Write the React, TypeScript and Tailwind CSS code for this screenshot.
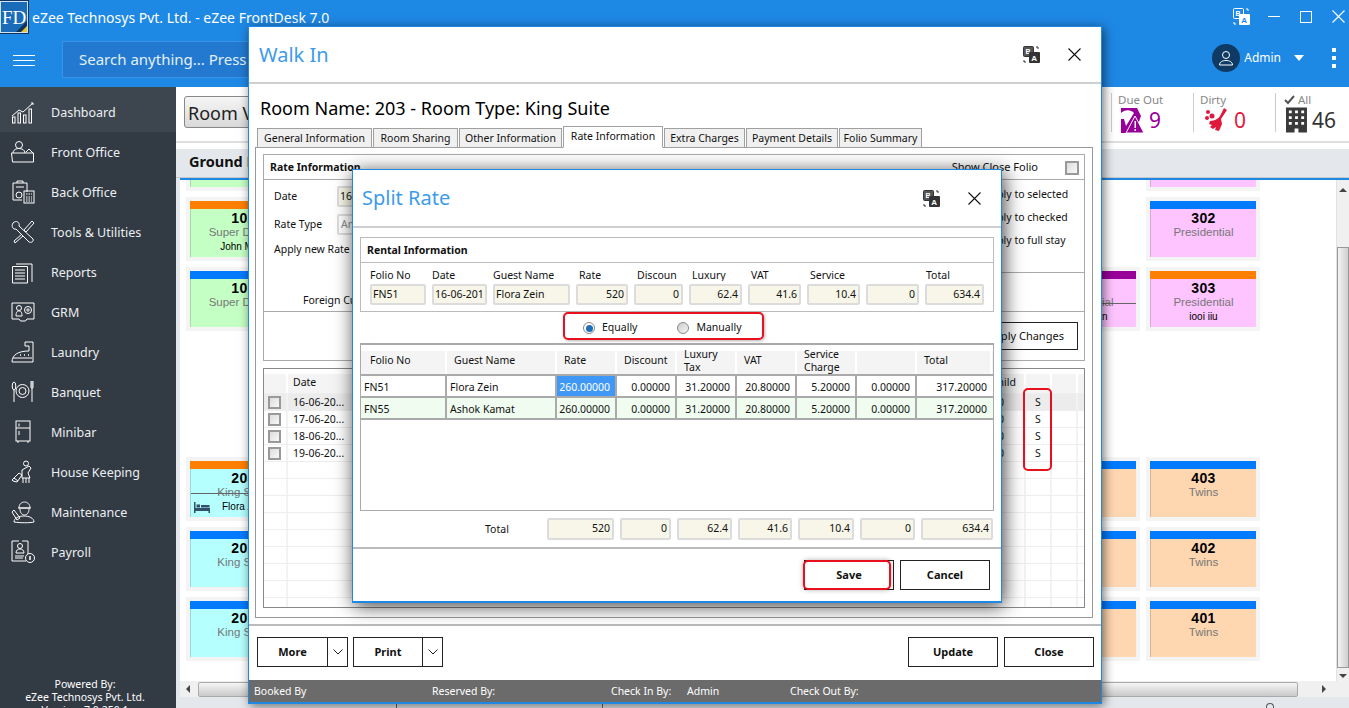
import React from "react";

const W = "fill-none stroke-white";
const navIcons: React.ReactNode[] = [
  <svg key="a" width="24" height="24" viewBox="0 0 24 24" className={W} strokeWidth="1"><path d="M1 16l7-6 4 2 10-9-2 0M22 3v2" /><rect x="1.5" y="17" width="2.5" height="6" /><rect x="7" y="13" width="2.5" height="10" /><rect x="12.5" y="15" width="2.5" height="8" /><rect x="18" y="9" width="2.5" height="14" /></svg>,
  <svg key="b" width="24" height="24" viewBox="0 0 24 24" className={W} strokeWidth="1"><circle cx="8" cy="5" r="3.5" /><path d="M2 13c0-3 3-4.500 6-4.500s6 1.500 6 4.500M0.500 13h22v9H1.500zM15 12l3-3 2 2 2 2" /></svg>,
  <svg key="c" width="24" height="24" viewBox="0 0 24 24" className={W} strokeWidth="1"><path d="M2 3h14v9M2 3v17h9M6 3V1h6v2M5 7h8" /><circle cx="8" cy="15" r="3" /><rect x="13" y="11" width="10" height="12" /><path d="M15 14h6M15 17h6M15 19h6M15 21h6" strokeDasharray="1.500 1" /></svg>,
  <svg key="d" width="24" height="24" viewBox="0 0 24 24" className={W} strokeWidth="1"><path d="M2 3c3-3 7-1 6 3l14 13c1 3-2 4-4 3L5 9C2 10 0 6 2 3zM21 1l2 2-8 9-2-2zM11 14l-8 7 1 2 8-7" /></svg>,
  <svg key="e" width="24" height="24" viewBox="0 0 24 24" className={W} strokeWidth="1"><path d="M5 4h16v18M1.500 6.500h15V23h-15zM4 10h10M4 13h10M4 16h10M4 19h10" /></svg>,
  <svg key="f" width="24" height="20" viewBox="0 0 24 20" className={W} strokeWidth="1"><path d="M1 1h22v16h-7l-1.500 2h-5L8 17H1z" /><circle cx="8" cy="6" r="2.500" /><path d="M5 14c0-4 1-5 3-5s3 1 3 5z" /><circle cx="17" cy="8" r="3.500" /><circle cx="17" cy="8" r="1.200" /></svg>,
  <svg key="g" width="24" height="22" viewBox="0 0 24 22" className={W} strokeWidth="1"><path d="M14 1h8v20H1c0-7 6-11 17-11V5h-4zM2 17h19" /><path d="M9 14h1M13 14h1M17 14h1" strokeWidth="1.500" /></svg>,
  <svg key="h" width="24" height="24" viewBox="0 0 24 24" className={W} strokeWidth="1"><ellipse cx="3" cy="6" rx="1.800" ry="4" /><path d="M3 10v12M20 1v6c0 2 2 2 2 0V1M21 1v21" /><circle cx="11.500" cy="11" r="6.500" /><circle cx="11.500" cy="11" r="3.500" /></svg>,
  <svg key="i" width="24" height="24" viewBox="0 0 24 24" className={W} strokeWidth="1"><rect x="5" y="1" width="14" height="20" /><path d="M5 8h14M8 3.500v3M8 11v4M7 21v2M17 21v2" /></svg>,
  <svg key="j" width="24" height="24" viewBox="0 0 24 24" className={W} strokeWidth="1"><circle cx="15" cy="3.500" r="2.500" /><path d="M11 10l7-4 2 2-3 5 2 5h-8zM1 20l7-7 3 2-5 7-4-1zM3 18l4 3M12 18v5M15 18v5M18 18v5" /></svg>,
  <svg key="k" width="24" height="24" viewBox="0 0 24 24" className={W} strokeWidth="1"><path d="M8 8c0-8 11-8 11 0zM7 8h13M9 9c0 8 9 8 9 0M3 22c0-4 5-6 10-6s10 2 10 6c-4 1-14 1-20 0zM3 10l6 8-3 2-5-8z" /></svg>,
  <svg key="l" width="24" height="24" viewBox="0 0 24 24" className={W} strokeWidth="1"><path d="M8 1H1v20h14M11 1h6v13" /><circle cx="9" cy="6" r="2.500" /><path d="M5 13c0-3 2-4 4-4s4 1 4 4zM4 16h9M4 18h8" /><circle cx="19" cy="18" r="4.500" /><path d="M19 16v4" strokeWidth="1.500" /></svg>,
];
const navLabels = ["Dashboard", "Front Office", "Back Office", "Tools & Utilities", "Reports", "GRM", "Laundry", "Banquet", "Minibar", "House Keeping", "Maintenance", "Payroll"];

function Translate({ dark }: { dark?: boolean }) {
  const c = dark ? "#333" : "#fff";
  const t = dark ? "#fff" : "#1e88e5";
  return (
    <svg width="17" height="17" viewBox="0 0 17 17">
      <rect x="0.500" y="0.500" width="10" height="10" rx="1" fill={dark ? "#555" : "none"} stroke={c} />
      <text x="2.500" y="8" fontSize="7" fontWeight="700" fill="#fff" fontFamily="Liberation Sans">B</text>
      <rect x="6" y="6" width="11" height="11" rx="1" fill={c} />
      <text x="8.200" y="15" fontSize="8" fontWeight="700" fill={t} fontFamily="Liberation Sans">A</text>
      <path d="M13 1h2v2M1 14v2h2" stroke={c} fill="none" />
    </svg>
  );
}

function CloseX({ size = 13, color = "#111" }: { size?: number; color?: string }) {
  return (
    <svg width={size} height={size} viewBox="0 0 13 13" stroke={color} strokeWidth="1.100"><path d="M0.500 0.500l12 12M12.500 0.500l-12 12" /></svg>
  );
}

function Chevron() {
  return (
    <svg width="10" height="6" viewBox="0 0 10 6" fill="none" stroke="#222"><path d="M0.500 0.500L5 5l4.500-4.500" /></svg>
  );
}

function Card({ bar, bg, num, name, guest, strike, bed }: { bar: string; bg: string; num: string; name: string; guest?: string; strike?: boolean; bed?: boolean }) {
  return (
    <div className={`relative w-[106px] h-[56px] flex flex-col shrink-0 shadow-[0_0_0_4px_#f4f4f4] border-l border-black/15 ${bg} font-['Liberation_Sans',sans-serif]`}>
      <div className={`h-2 -ml-px ${bar}`} />
      <div className="text-center text-[14px] tracking-[0.3px] font-bold leading-[16px] mt-[1px] text-black">{num}</div>
      <div className="text-center text-[11.500px] leading-[13px] text-[#777]">{name}</div>
      {guest && (
        <div className={`flex items-center gap-[12px] text-[10px] leading-[12px] text-black mt-[2px] whitespace-nowrap ${bed ? "pl-[3px]" : "justify-center"}`}>
          {bed && (
            <svg width="16" height="11" viewBox="0 0 16 11" fill="#35506b"><path d="M0 0h1.500v6H16v5h-1.500V9h-13v2H0zM2.500 2.500h3.500v3H2.500zM7 3h8.500v2.500H7z" /></svg>
          )}
          <span>{guest}</span>
        </div>
      )}
      {strike && <div className="absolute left-0 right-0 top-[32px] h-px bg-[#666]" />}
    </div>
  );
}

const green = "bg-[#c4ffc4]";
const cyan = "bg-[#b5ffff]";
const pink = "bg-[#fec4ff]";
const peach = "bg-[#fed6b0]";
const blueBar = "bg-[#007bff]";
const orangeBar = "bg-[#ff7f00]";

const gridHeaderBg = "bg-gradient-to-b from-white from-20% to-[#f4f4f4] to-20%";

function Field({ w, label, value, right, pad }: { w: string; label: string; value: string; right?: boolean; pad?: string }) {
  return (
    <div className={`${w} shrink-0 flex flex-col`}>
      <div className={`h-[12px] leading-[12px] mt-[6px] mb-[3px] whitespace-nowrap overflow-hidden ${pad ?? ""}`}>{label}</div>
      <Box value={value} right={right} className="h-[21px] w-full" />
    </div>
  );
}

function Box({ value, right, className }: { value: string; right?: boolean; className?: string }) {
  return (
    <div className={`bg-[#f7f6e8] border-2 border-[#dcdcdc] rounded-[2px] flex items-center pl-[1px] pr-[2px] overflow-hidden whitespace-nowrap ${right ? "justify-end" : ""} ${className ?? ""}`}>
      {value}
    </div>
  );
}

const splitCols = ["w-[86px]", "w-[110px]", "w-[60px]", "w-[60px]", "w-[60px]", "w-[60px]", "w-[60px]", "w-[60px]", "w-[75px]"];
const splitHead: React.ReactNode[] = ["Folio No", "Guest Name", "Rate", "Discount", <>Luxury<br />Tax</>, "VAT", <>Service<br />Charge</>, "", "Total"];
const splitPad = ["pl-[9px]", "pl-[7px]", "pl-[7px]", "pl-[7px]", "pl-[7px]", "pl-[7px]", "pl-[7px]", "pl-[7px]", "pl-[7px]"];

function SplitRow({ values, bg }: { values: string[]; bg: string }) {
  return (
    <div className={`flex h-[22px] border-b-2 border-[#aaa] ${bg}`}>
      {values.map((v, i) => (
        <div
          key={i}
          className={`${splitCols[i]} shrink-0 flex items-center border-r-2 border-[#aaa] last:border-r-0 ${i < 2 ? "pl-[3px]" : "justify-end pr-[5px]"} ${v === "260.00000" && bg === "bg-white" ? "bg-[#3f98f5] text-white" : ""}`}
        >
          <span className="pt-[3px]">{v}</span>
        </div>
      ))}
    </div>
  );
}

function WBtn({ w, children, className }: { w: string; children: React.ReactNode; className?: string }) {
  return (
    <div className={`${w} h-[30px] border border-[#222] flex items-center justify-center font-bold text-[11px] bg-white ${className ?? ""}`}>{children}</div>
  );
}

export default function App() {
  return (
    <div className="relative w-[1349px] h-[708px] overflow-hidden flex flex-col bg-white text-[10.500px] text-[#111] font-['Noto_Sans',sans-serif]">
      {/* App header */}
      <header className="h-[87px] shrink-0 bg-[#1e88e5] text-white flex flex-col">
        <div className="h-[33px] flex items-start">
          <div className="relative w-[28px] h-[32px] mt-[1px] bg-[#1a6cb8] border border-[#cfe3f5] outline outline-1 outline-[#12325a] flex items-center overflow-hidden pl-[1px]">
            <span className="font-['Liberation_Serif',serif] text-[19px] leading-none text-white">FD</span>
            <svg className="absolute right-0 bottom-0" width="11" height="11" viewBox="0 0 11 11"><path d="M11 0v11H0z" fill="#12325a" /><path d="M11 5v6H5z" fill="#e5c52e" /></svg>
          </div>
          <div className="ml-[4px] mt-[8px] text-[14px] leading-[20px] whitespace-nowrap">eZee Technosys Pvt. Ltd. - eZee FrontDesk 7.0</div>
          <div className="ml-auto flex items-center h-[33px] pr-[4px]">
            <Translate />
            <div className="w-[12px] h-px bg-white ml-[18px]" />
            <div className="w-[12px] h-[12px] border border-white ml-[20px]" />
            <div className="ml-[20px]"><CloseX size={13} color="#fff" /></div>
          </div>
        </div>
        <div className="flex-1 flex items-start">
          <div className="w-[22px] ml-[13px] mt-[22px] flex flex-col gap-[4px]">
            <div className="h-px bg-white" />
            <div className="h-px bg-white" />
            <div className="h-px bg-white" />
          </div>
          <div className="ml-[27px] mt-[8px] w-[400px] h-[37px] bg-[#2279cf] border border-[#3a93e6] flex items-center pl-[16px] text-[15px] text-[#e3f0fb] whitespace-nowrap">Search anything... Press Ctrl+F</div>
          <div className="ml-auto flex items-center mt-[11px] pr-[13px]">
            <div className="w-[28px] h-[28px] rounded-full bg-[#0f3a63] flex items-center justify-center">
              <svg width="16" height="16" viewBox="0 0 16 16" fill="none" stroke="#fff"><circle cx="8" cy="5" r="3.500" /><path d="M1.500 15c0-3 3-4.500 6.500-4.500s6.500 1.500 6.500 4.500z" /></svg>
            </div>
            <span className="ml-[4px] text-[12px] leading-[16px]">Admin</span>
            <svg className="ml-[13px]" width="10" height="6" viewBox="0 0 10 6" fill="#fff"><path d="M0 0h10L5 6z" /></svg>
            <div className="ml-[28px] flex flex-col gap-[4px]">
              <div className="w-1 h-1 bg-white" />
              <div className="w-1 h-1 bg-white" />
              <div className="w-1 h-1 bg-white" />
            </div>
          </div>
        </div>
      </header>

      <div className="flex-1 flex min-h-0">
        {/* Sidebar */}
        <aside className="w-[176px] shrink-0 bg-[#323a44] text-[#eceff1] flex flex-col text-[12.500px]">
          {navLabels.map((l, i) => (
            <div key={l} className={`flex items-center shrink-0 ${i === 0 ? "h-[45px] pt-[5px] bg-[#3d454f]" : "h-[40px]"}`}>
              <div className="w-[24px] ml-[11px] flex justify-center">{navIcons[i]}</div>
              <span className="ml-[16px] pt-[2px] leading-[16px]">{l}</span>
            </div>
          ))}
          <div className="mt-auto h-[30px] w-[170px] overflow-hidden text-center text-[10.500px] leading-[13px] text-white">
            <div>Powered By:</div>
            <div>eZee Technosys Pvt. Ltd.</div>
            <div>Version: 7.0.250.1</div>
          </div>
        </aside>

        {/* Main */}
        <main className="flex-1 min-w-0 flex flex-col bg-[#e4e8ec]">
          <div className="h-[54px] shrink-0 bg-white flex items-start">
            <div className="ml-[8px] mt-[9px] w-[160px] h-[32px] border border-[#888] rounded-[3px] bg-gradient-to-b from-[#f6f6f6] to-[#d9d9d9] text-[18px] leading-[32px] pl-[3px] text-[#222] whitespace-nowrap">Room View</div>
            <div className="ml-auto flex h-[39px] mt-[6px] mr-[13px]">
              <div className="w-[82px] border-l border-[#ccc] pl-[6px] flex flex-col">
                <span className="text-[11.500px] leading-[14px] text-[#888]">Due Out</span>
                <div className="flex items-center ml-[2px]">
                  <svg width="25" height="26" viewBox="0 0 25 26"><path d="M1 1h16l4 8-6 17H1z" fill="#990099" /><path d="M1 6c5-4 10-3 13 0l-8 13-2-7H1z" fill="#fff" /><path d="M15 9l9 17H6z" fill="#990099" stroke="#fff" /><path d="M14.500 14h1.500v7h-1.500zM14.500 22h1.500v2h-1.500z" fill="#fff" /></svg>
                  <span className="ml-[4px] text-[21px] leading-[24px] text-[#990099]">9</span>
                </div>
              </div>
              <div className="w-[82px] border-l border-[#ccc] pl-[6px] flex flex-col">
                <span className="text-[11.500px] leading-[14px] text-[#888]">Dirty</span>
                <div className="flex items-center ml-[4px]">
                  <svg width="24" height="26" viewBox="0 0 24 26" fill="#e0183c"><circle cx="4" cy="5" r="2" /><circle cx="3" cy="11" r="2" /><circle cx="8" cy="9" r="2.500" /><path d="M20 1l3 2-6 9 1 5-3 7-4-1 1-3-3 2-3-2 2-2-3-1 1-3c5 0 9-3 10-5z" /></svg>
                  <span className="ml-[6px] text-[21px] leading-[24px] text-[#e0183c]">0</span>
                </div>
              </div>
              <div className="w-[61px] border-l border-[#ccc] pl-[8px] flex flex-col">
                <span className="flex items-center text-[11.500px] leading-[14px] text-[#888]">
                  <svg width="11" height="10" viewBox="0 0 11 10" fill="none" stroke="#555" strokeWidth="2"><path d="M1 5l3 3 6-7" /></svg>
                  <span className="ml-[3px]">All</span>
                </span>
                <div className="flex items-center ml-[2px]">
                  <svg width="22" height="26" viewBox="0 0 22 26" fill="#3a3a3a"><path d="M0 0h22v26H13v-4H9v4H0z" /><path d="M3 3h3v3H3zM9.500 3h3v3h-3zM16 3h3v3h-3zM3 9h3v3H3zM9.500 9h3v3h-3zM16 9h3v3h-3zM3 15h3v3H3zM9.500 15h3v3h-3zM16 15h3v3h-3z" fill="#fff" /></svg>
                  <span className="ml-[5px] text-[21px] leading-[24px] text-[#333]">46</span>
                </div>
              </div>
            </div>
          </div>
          <div className="h-[8px] shrink-0 bg-white border-t-2 border-[#dfdfdf]" />
          <div className="h-[29px] shrink-0 border-b border-[#c8c8c8] pl-[13px] pb-[2px] flex items-center text-[14.500px] font-bold text-[#111] bg-[#e4e8ec] whitespace-nowrap">Ground Floor</div>
          <div className="flex-1 min-h-0 ml-[4px] flex flex-col">
            <div className="h-[2px] shrink-0 bg-[#1e88e5]" />
            <div className="flex-1 min-h-0 flex">
              <div className="flex-1 min-w-0 bg-white overflow-hidden pl-[10px] flex">
                <div className="w-[106px] shrink-0 -mt-[49px] flex flex-col gap-[14px]">
                  <Card bar={blueBar} bg={green} num="103" name="Super Deluxe" />
                  <Card bar={orangeBar} bg={green} num="102" name="Super Deluxe" guest="John Mark" />
                  <Card bar={blueBar} bg={green} num="101" name="Super Deluxe" />
                  <div className="h-[106px] shrink-0" />
                  <Card bar={orangeBar} bg={cyan} num="203" name="King Suite" guest="Flora Zein" strike bed />
                  <Card bar={blueBar} bg={cyan} num="202" name="King Suite" />
                  <Card bar={blueBar} bg={cyan} num="201" name="King Suite" />
                </div>
                <div className="w-[106px] shrink-0 ml-[734px] -mt-[49px] flex flex-col gap-[14px]">
                  <div className="h-[126px] shrink-0" />
                  <Card bar="bg-[#990099]" bg={pink} num="304" name="Presidential" guest="John Dean" strike />
                  <div className="h-[106px] shrink-0" />
                  <Card bar={blueBar} bg={peach} num="406" name="Twins" />
                  <Card bar={blueBar} bg={peach} num="405" name="Twins" />
                  <Card bar={blueBar} bg={peach} num="404" name="Twins" />
                </div>
                <div className="w-[106px] shrink-0 ml-[14px] -mt-[49px] flex flex-col gap-[14px]">
                  <Card bar={blueBar} bg={pink} num="301" name="Presidential" />
                  <Card bar={blueBar} bg={pink} num="302" name="Presidential" />
                  <Card bar={orangeBar} bg={pink} num="303" name="Presidential" guest="iooi iiu" />
                  <div className="h-[106px] shrink-0" />
                  <Card bar={blueBar} bg={peach} num="403" name="Twins" />
                  <Card bar={blueBar} bg={peach} num="402" name="Twins" />
                  <Card bar={blueBar} bg={peach} num="401" name="Twins" />
                </div>
              </div>
              {/* vertical scrollbar */}
              <div className="w-[13px] shrink-0 bg-[#f0f0f0] flex flex-col items-center border-l border-[#e2e2e2]">
                <svg className="mt-[8px]" width="8" height="4" viewBox="0 0 8 4" fill="#444"><path d="M4 0l4 4H0z" /></svg>
                <div className="mt-[55px] w-full h-[421px] bg-gradient-to-r from-[#f4f4f4] to-[#cfcfcf] border border-[#999]" />
                <svg className="mt-[6px]" width="8" height="4" viewBox="0 0 8 4" fill="#444"><path d="M4 4l4-4H0z" /></svg>
              </div>
            </div>
            {/* horizontal scrollbar */}
            <div className="h-[16px] shrink-0 bg-[#f0f0f0] flex items-center">
              <svg className="ml-[6px]" width="4" height="8" viewBox="0 0 4 8" fill="#444"><path d="M0 4l4-4v8z" /></svg>
              <div className="ml-[8px] w-[1100px] h-[15px] bg-gradient-to-b from-[#f6f6f6] to-[#c9c9c9] border border-[#aaa] rounded-[2px]" />
              <svg className="ml-[24px]" width="4" height="8" viewBox="0 0 4 8" fill="#444"><path d="M4 4L0 0v8z" /></svg>
            </div>
          </div>
          <div className="h-[11px] shrink-0 flex items-end pl-[220px]">
            <div className="w-px h-[5px] bg-[#666]" />
            <div className="w-px h-[5px] bg-[#666] ml-[205px]" />
            <div className="w-[8px] h-[5px] ml-[663px] rounded-t-full border border-b-0 border-[#555]" />
          </div>
        </main>
      </div>

      {/* Walk In window */}
      <section className="absolute left-[248px] top-[26px] w-[854px] h-[678px] bg-white border border-b-2 border-[#1e88e5] shadow-[2px_2px_10px_rgba(0,0,0,0.55)] flex flex-col">
        <div className="h-[57px] shrink-0 border-b-2 border-[#cfcfcf] flex items-center pl-[10px] pr-[20px]">
          <h2 className="text-[20px] leading-[28px] text-[#3d9be9]">Walk In</h2>
          <div className="ml-auto flex items-center gap-[28px]">
            <Translate dark />
            <CloseX />
          </div>
        </div>
        <div className="h-[42px] shrink-0 pt-[11px] pl-[11px] text-[18px] leading-[26px] text-black whitespace-nowrap">Room Name: 203 - Room Type: King Suite</div>
        <div className="relative z-10 h-[22px] -mb-[1px] shrink-0 flex items-end ml-[8px] gap-px">
          {[
            ["General Information", "w-[115px]"],
            ["Room Sharing", "w-[85px]"],
            ["Other Information", "w-[103px]"],
            ["Rate Information", "w-[100px]"],
            ["Extra Charges", "w-[81px]"],
            ["Payment Details", "w-[92px]"],
            ["Folio Summary", "w-[83px]"],
          ].map(([t, w]) => (
            <div
              key={t}
              className={`${w} shrink-0 flex items-center justify-center border border-[#a0a0a0] whitespace-nowrap ${t === "Rate Information" ? "h-[22px] bg-white border-b-white" : "h-[20px] pt-[1px] bg-[#f0f0f0]"}`}
            >
              {t}
            </div>
          ))}
        </div>
        <div className="ml-[6px] w-[838px] h-[471px] shrink-0 border border-[#999] px-[7px] pt-[6px] flex flex-col">
          <div className="h-[158px] shrink-0 border border-[#aaa] flex flex-col">
            <div className="h-[25px] shrink-0 border-b border-[#aaa] flex items-center pl-[6px] pr-[5px] pt-[1px]">
              <span className="font-bold">Rate Information</span>
              <span className="ml-auto text-[11px]">Show Close Folio</span>
              <div className="ml-[27px] w-[14px] h-[14px] border-2 border-[#999] bg-gradient-to-br from-[#ddd] to-[#f8f8f8]" />
            </div>
            <div className="flex-1 flex justify-between">
              <div className="flex flex-col pl-[10px]">
                <div className="flex items-center mt-[6px] h-[21px]">
                  <span className="w-[63px] pt-[1px]">Date</span>
                  <Box value="16-06-2018" className="w-[120px] h-[21px]" />
                </div>
                <div className="flex items-center mt-[7px] h-[21px]">
                  <span className="w-[63px]">Rate Type</span>
                  <div className="w-[120px] h-[21px] border-2 border-[#ddd] rounded-[2px] px-[2px] text-[#888] flex items-center">Any</div>
                </div>
                <div className="mt-[4px] h-[20px] leading-[20px]">Apply new Rate</div>
                <div className="mt-[33px] ml-[29px] leading-[16px]">Foreign Currency</div>
              </div>
              <div className="w-[300px] h-[93px] border-b border-[#aaa] pl-[200px] pt-[3px] leading-[23px]">
                <div>Apply to selected</div>
                <div>Apply to checked</div>
                <div>Apply to full stay</div>
              </div>
            </div>
          </div>
          <div className="h-[49px] shrink-0 border border-t-0 border-[#aaa] flex items-start justify-end pr-[6px] pt-[10px]">
            <div className="w-[105px] h-[28px] border border-[#222] flex items-center justify-center text-[11px]">Apply Changes</div>
          </div>
          <div className="mt-[7px] h-[240px] shrink-0 border border-[#888] overflow-hidden flex flex-col">
            <div className={`h-[25px] shrink-0 flex border-b border-[#eee] ${gridHeaderBg}`}>
              <div className="w-[24px] shrink-0 border-r-2 border-white" />
              <div className="flex-1 pl-[5px] pt-[3px] flex items-center">Date</div>
              <div className="w-[53px] shrink-0 flex items-center justify-end pr-[8px] pt-[3px]">Child</div>
              <div className="w-[26px] shrink-0 border-l-2 border-white" />
              <div className="w-[26px] shrink-0 border-l-2 border-white" />
              <div className="w-[8px] shrink-0 border-l-2 border-white" />
            </div>
            {Array.from({ length: 13 }).map((_, i) => {
              const dates = ["16-06-20...", "17-06-20...", "18-06-20...", "19-06-20..."];
              const d = dates[i];
              return (
                <div key={i} className={`h-[17px] shrink-0 flex border-b border-[#eee] ${i === 0 ? "bg-[#ececec]" : ""}`}>
                  <div className="w-[24px] shrink-0 border-r-2 border-[#f2f2f2] flex items-center pl-[4px]">
                    {d && <div className="w-[13px] h-[13px] border-2 border-[#999] bg-gradient-to-br from-[#ddd] to-[#f8f8f8]" />}
                  </div>
                  <div className="flex-1 pl-[5px] leading-[16px]">{d}</div>
                  <div className="w-[53px] shrink-0 pr-[20px] text-right leading-[16px]">{d ? "0" : ""}</div>
                  <div className="w-[26px] shrink-0 border-l-2 border-[#f2f2f2] text-center leading-[16px]">{d ? "S" : ""}</div>
                  <div className="w-[26px] shrink-0 border-l-2 border-[#f2f2f2]" />
                  <div className="w-[8px] shrink-0 border-l-2 border-[#f2f2f2]" />
                </div>
              );
            })}
          </div>
        </div>
        <div className="mt-[6px] shrink-0 border-t-2 border-[#bbb] pt-[11px] pl-[8px] pr-[7px] flex">
          <WBtn w="w-[71px]">More</WBtn>
          <WBtn w="w-[20px]" className="border-l-0"><Chevron /></WBtn>
          <WBtn w="w-[70px]" className="ml-[5px]">Print</WBtn>
          <WBtn w="w-[20px]" className="border-l-0"><Chevron /></WBtn>
          <WBtn w="w-[90px]" className="ml-auto">Update</WBtn>
          <WBtn w="w-[90px]" className="ml-[6px]">Close</WBtn>
        </div>
        <div className="mt-auto h-[22px] shrink-0 bg-[#6b6b6b] text-white flex items-center pl-[5px] pt-[2px] whitespace-nowrap">
          <span className="w-[178px]">Booked By</span>
          <span className="w-[179px]">Reserved By:</span>
          <span className="w-[76px]">Check In By:</span>
          <span className="w-[103px]">Admin</span>
          <span>Check Out By:</span>
        </div>
      </section>

      {/* Split Rate window */}
      <section className="absolute left-[352px] top-[169px] w-[650px] h-[434px] bg-white border border-b-2 border-[#1e88e5] shadow-[2px_3px_18px_rgba(0,0,0,0.75)] flex flex-col">
        <div className="h-[58px] shrink-0 border-b-2 border-[#cfcfcf] flex items-center pl-[9px] pr-[20px]">
          <h2 className="text-[20px] leading-[28px] text-[#3d9be9]">Split Rate</h2>
          <div className="ml-auto flex items-center gap-[28px]">
            <Translate dark />
            <CloseX />
          </div>
        </div>
        <div className="mt-[9px] mx-[7px] h-[75px] shrink-0 border border-[#bbb] flex flex-col">
          <div className="h-[25px] shrink-0 border-b border-[#bbb] flex items-center pl-[6px] pt-[1px] font-bold">Rental Information</div>
          <div className="flex pl-[9px] gap-[6px]">
            <Field w="w-[56px]" label="Folio No" value="FN51" />
            <Field w="w-[55px]" label="Date" value="16-06-201" />
            <Field w="w-[77px]" label="Guest Name" value="Flora Zein" />
            <Field w="w-[52px]" label="Rate" value="520" right pad="pl-[3px]" />
            <Field w="w-[49px]" label="Discoun" value="0" right pad="pl-[3px]" />
            <Field w="w-[53px]" label="Luxury" value="62.4" right pad="pl-[3px]" />
            <Field w="w-[53px]" label="VAT" value="41.6" right pad="pl-[3px]" />
            <Field w="w-[53px]" label="Service" value="10.4" right pad="pl-[3px]" />
            <Field w="w-[53px]" label="" value="0" right />
            <Field w="w-[59px]" label="Total" value="634.4" right pad="pl-[1px]" />
          </div>
        </div>
        <div className="ml-[210px] w-[201px] h-[28px] shrink-0 border-2 border-[#e8101c] rounded-[5px] shadow-[1px_1px_3px_rgba(0,0,0,0.3)] flex items-center pl-[18px] pt-[4px]">
          <div className="w-[12px] h-[12px] rounded-full border border-[#888] bg-white flex items-center justify-center">
            <div className="w-[7px] h-[7px] rounded-full bg-[#1c6fb8]" />
          </div>
          <span className="ml-[7px]">Equally</span>
          <div className="ml-[40px] w-[12px] h-[12px] rounded-full border border-[#888] bg-gradient-to-br from-[#ccc] to-[#f5f5f5]" />
          <span className="ml-[7px]">Manually</span>
        </div>
        <div className="mt-[3px] mx-[7px] h-[168px] shrink-0 border border-t-2 border-[#aaa] flex flex-col">
          <div className={`h-[31px] shrink-0 flex border-b-2 border-[#aaa] ${gridHeaderBg}`}>
            {splitHead.map((h, i) => (
              <div key={i} className={`${splitCols[i]} ${splitPad[i]} shrink-0 flex items-center pt-[2px] leading-[13px] border-r-2 border-white`}>{h}</div>
            ))}
          </div>
          <SplitRow bg="bg-white" values={["FN51", "Flora Zein", "260.00000", "0.00000", "31.20000", "20.80000", "5.20000", "0.00000", "317.20000"]} />
          <SplitRow bg="bg-[#f0fcf0]" values={["FN55", "Ashok Kamat", "260.00000", "0.00000", "31.20000", "20.80000", "5.20000", "0.00000", "317.20000"]} />
        </div>
        <div className="mt-[7px] mx-[7px] h-[22px] shrink-0 flex gap-[6px]">
          <div className="w-[181px] shrink-0 pl-[125px] pt-[2px] flex items-center">Total</div>
          <Box value="520" right className="w-[67px]" />
          <Box value="0" right className="w-[51px]" />
          <Box value="62.4" right className="w-[55px]" />
          <Box value="41.6" right className="w-[54px]" />
          <Box value="10.4" right className="w-[56px]" />
          <Box value="0" right className="w-[55px]" />
          <Box value="634.4" right className="w-[72px]" />
        </div>
        <div className="mt-[7px] shrink-0 border-t-2 border-[#bbb] flex justify-end pt-[11px] pr-[11px] gap-[6px]">
          <div className="relative">
            <WBtn w="w-[90px]">Save</WBtn>
            <div className="absolute -left-[1px] top-0 w-[88px] h-[30px] border-2 border-[#e8101c] rounded-[5px] shadow-[0_0_5px_rgba(0,0,0,0.3)]" />
          </div>
          <WBtn w="w-[90px]">Cancel</WBtn>
        </div>
      </section>

      {/* Red annotation over the S column of the window behind */}
      <div className="absolute left-[1023px] top-[388px] w-[29px] h-[83px] border-2 border-[#e8101c] rounded-[5px]" />
    </div>
  );
}
